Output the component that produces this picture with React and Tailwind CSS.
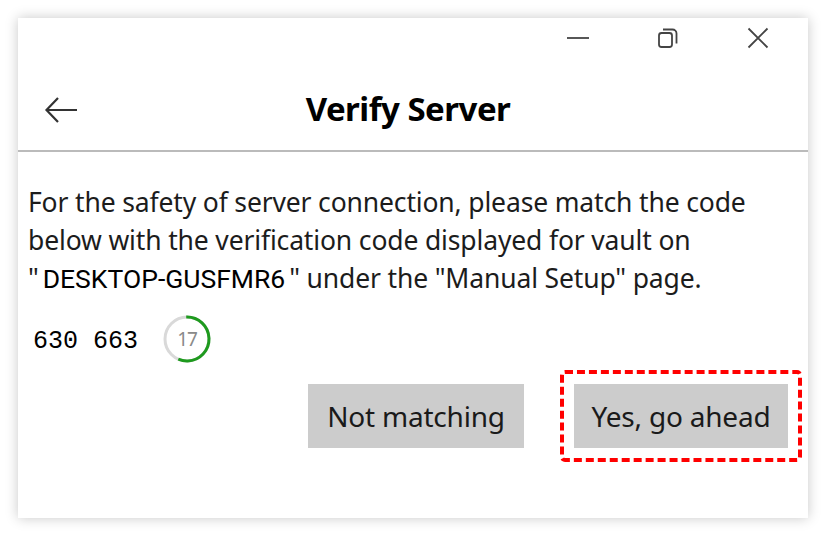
import React from 'react'

const Timer = ({ left = 17, total = 30 }) => {
  const r = 22
  const c = 2 * Math.PI * r
  const frac = left / total
  return (
    <div className="relative w-[50px] h-[50px] flex items-center justify-center">
      <svg width="50" height="50" viewBox="0 0 50 50" className="absolute inset-0">
        <circle cx="25" cy="25" r={r} fill="none" stroke="#d9d9d9" strokeWidth="3" />
        <circle
          cx="25"
          cy="25"
          r={r}
          fill="none"
          stroke="#1e9a1e"
          strokeWidth="3"
          strokeDasharray={`${c * frac} ${c}`}
          transform="rotate(-92 25 25)"
        />
      </svg>
      <span className="relative text-[19px] text-[#8a8a8a] font-['Noto_Sans',sans-serif] tracking-[-1px]">{left}</span>
    </div>
  )
}

export default function App() {
  return (
    <div className="w-[826px] h-[536px] bg-white pt-[18px] pl-[18px]">
      <div className="w-[790px] h-[500px] bg-white shadow-[0_0_12px_rgba(0,0,0,0.22)] flex flex-col font-['Noto_Sans',sans-serif]">
        {/* title bar */}
        <div className="h-[40px] flex items-center justify-end pr-[5px]">
          <div className="w-[90px] flex justify-center">
            <svg width="24" height="24" viewBox="0 0 24 24">
              <path d="M1 12h22" stroke="#444" strokeWidth="1.8" />
            </svg>
          </div>
          <div className="w-[90px] flex justify-center">
            <svg width="24" height="24" viewBox="0 0 24 24" fill="none" stroke="#444" strokeWidth="1.8">
              <rect x="3" y="7" width="13" height="14" rx="2.5" />
              <path d="M7 3.5h9.5a4 4 0 0 1 4 4v10" />
            </svg>
          </div>
          <div className="w-[90px] flex justify-center">
            <svg width="24" height="24" viewBox="0 0 24 24">
              <path d="M2.5 2.5l19 19M21.5 2.5l-19 19" stroke="#444" strokeWidth="1.8" />
            </svg>
          </div>
        </div>

        {/* header */}
        <div className="relative h-[94px] flex items-center justify-center pt-[10px] pr-[10px] border-b-2 border-[#bbbbbb]">
          <button className="absolute left-[25px] top-[36px]">
            <svg width="36" height="32" viewBox="0 0 36 32" fill="none" stroke="#333" strokeWidth="2.2">
              <path d="M4 16h30M15 4L3.5 16 15 28" />
            </svg>
          </button>
          <h1 className="text-[33px] font-bold text-black tracking-[-0.5px]">Verify Server</h1>
        </div>

        {/* body */}
        <div className="pl-[10px] pr-[10px] pt-[31px]">
          <p className="text-[26.5px] leading-[38px] text-[#1c1c1c] tracking-[-0.15px] whitespace-nowrap">
            For the safety of server connection, please match the code
            <br />
            below with the verification code displayed for vault on
            <br />
            "<span className="font-['Roboto',sans-serif] text-black tracking-[0px] px-[4px]">DESKTOP-GUSFMR6</span>" under the "Manual Setup" page.
          </p>
          <div className="flex items-center gap-[24px] mt-[16px] pl-[5px]">
            <span className="font-['Liberation_Mono',monospace] text-[25px] text-black mt-[6px]">630 663</span>
            <Timer />
          </div>
        </div>

        {/* actions */}
        <div className="flex justify-end items-center pr-[6px] mt-[6px]">
          <button className="w-[216px] h-[64px] bg-[#cccccc] text-[28px] text-[#1a1a1a] tracking-[-0.2px] mr-[36px]">
            Not matching
          </button>
          <div className="p-[10px] border-[4px] border-dashed border-[#ff0000] rounded-[5px]">
            <button className="w-[214px] h-[64px] bg-[#cccccc] text-[28px] text-[#1a1a1a] tracking-[-0.2px] block">
              Yes, go ahead
            </button>
          </div>
        </div>
      </div>
    </div>
  )
}
